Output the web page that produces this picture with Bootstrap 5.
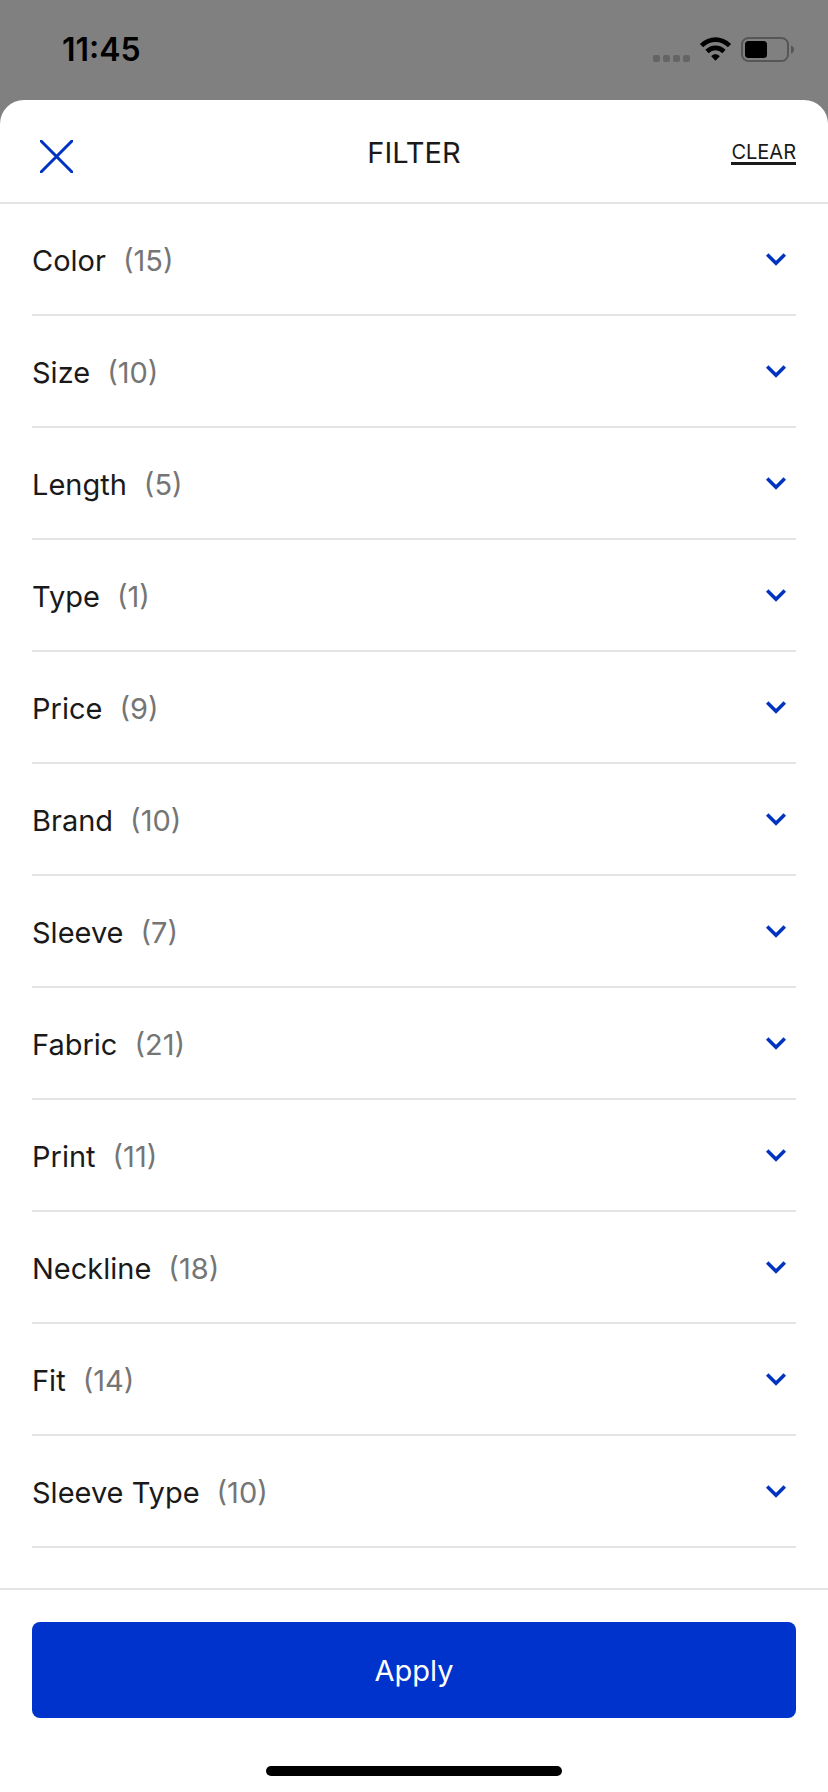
<!DOCTYPE html>
<html lang="en">
<head>
<meta charset="utf-8">
<meta name="viewport" content="width=device-width, initial-scale=1">
<title>Filter</title>
<link href="https://cdn.jsdelivr.net/npm/bootstrap@5.3.0/dist/css/bootstrap.min.css" rel="stylesheet">
<style>
  :root { --brand: #0033cc; --ink: #1a1a1a; --muted: #757575; --line: #e4e4e4; --gutter: 32px; }
  body { background: #808080; color: var(--ink); font-family: Inter, "Liberation Sans", sans-serif; font-size: 29px; line-height: 36px; }
  button { color: inherit; }
  .status-bar { height: 100px; padding: 0 34px 0 62px; color: #000; }
  .status-time { font-size: 32px; font-weight: 600; }
  .sheet { background: #fff; border-radius: 24px 24px 0 0; }
  .sheet-header { height: 104px; padding: 4px var(--gutter) 0; border-bottom: 2px solid var(--line); }
  .close-btn { padding: 6px 8px 0; }
  .sheet-title { font-size: 29px; line-height: 36px; font-weight: 400; }
  .clear-link { color: var(--ink); font-size: 20px; line-height: 20px; border-bottom: 3px solid var(--ink); }
  .filter-list { padding: 0 var(--gutter); }
  .filter-row { height: 112px; border-bottom: 2px solid var(--line); }
  .filter-row button { gap: 17px; padding: 4px 10px 0 0; }
  .filter-count { color: var(--muted); }
  .sheet-footer { border-top: 2px solid var(--line); padding: 32px var(--gutter) 16px; }
  .apply-btn { --bs-btn-bg: var(--brand); --bs-btn-color: #fff; --bs-btn-hover-bg: #0029a3; --bs-btn-hover-color: #fff; --bs-btn-border-width: 0; --bs-btn-font-size: 29px; --bs-btn-line-height: 36px; --bs-btn-border-radius: 8px; height: 96px; padding: 2px 16px 0; }
  .home-indicator { width: 296px; height: 10px; margin-top: 48px; background: #000; }
</style>
</head>
<body>
<div class="d-flex flex-column min-vh-100">
  <div class="status-bar d-flex align-items-center justify-content-between">
    <span class="status-time">11:45</span>
    <svg width="144" height="28" viewBox="0 0 144 28" aria-hidden="true">
      <g fill="#646464"><rect x="3" y="19" width="7" height="7" rx="2"/><rect x="13" y="19" width="7" height="7" rx="2"/><rect x="23" y="19" width="7" height="7" rx="2"/><rect x="33" y="19" width="7" height="7" rx="2"/></g>
      <g fill="none" stroke="#000" stroke-width="4.6"><path d="M51.500 9.600C60 1.600 71 1.600 79.500 9.600"/><path d="M57 15.500C62 10.600 69 10.600 74 15.500"/></g>
      <path d="M61.200 20.200C64 17.600 67 17.600 69.800 20.200L65.500 24.800Z"/>
      <rect x="92" y="2" width="46" height="23" rx="6.500" fill="none" stroke="#565656" stroke-width="2"/>
      <rect x="95" y="5" width="22" height="17" rx="3.500"/>
      <path d="M141 9.500Q144 10.500 144 13.500T141 17.500Z" fill="#565656"/>
    </svg>
  </div>

  <main class="sheet d-flex flex-column flex-grow-1">
    <header class="sheet-header d-flex align-items-center">
      <div class="col d-flex">
        <button type="button" class="close-btn border-0 bg-transparent d-flex" aria-label="Close">
          <svg width="33" height="33" viewBox="0 0 33 33" fill="none" stroke="#0033bf" stroke-width="3"><path d="M0 0L33 33M33 0L0 33"/></svg>
        </button>
      </div>
      <h1 class="sheet-title mb-0">FILTER</h1>
      <div class="col d-flex justify-content-end"><a href="#" class="clear-link text-decoration-none">CLEAR</a></div>
    </header>

    <ul class="filter-list list-unstyled mb-0 flex-grow-1" id="filters"></ul>

    <footer class="sheet-footer">
      <button type="button" class="apply-btn btn w-100">Apply</button>
      <div class="home-indicator rounded-pill mx-auto"></div>
    </footer>
  </main>
</div>
<script src="https://cdn.jsdelivr.net/npm/bootstrap@5.3.0/dist/js/bootstrap.bundle.min.js"></script>
<script>
  const filters = [['Color', 15], ['Size', 10], ['Length', 5], ['Type', 1], ['Price', 9], ['Brand', 10],
    ['Sleeve', 7], ['Fabric', 21], ['Print', 11], ['Neckline', 18], ['Fit', 14], ['Sleeve Type', 10]];
  document.getElementById('filters').innerHTML = filters.map(([name, count]) => `
    <li class="filter-row">
      <button type="button" class="w-100 h-100 border-0 bg-transparent text-start d-flex align-items-center" aria-expanded="false">
        <span>${name}</span><span class="filter-count">(${count})</span>
        <svg class="ms-auto mb-1" width="20" height="13" viewBox="0 0 20 13" fill="none" stroke="#0033bf" stroke-width="3.500" aria-hidden="true"><path d="M1.200 1.500L10 10.300L18.800 1.500"/></svg>
      </button>
    </li>`).join('');
</script>
</body>
</html>
